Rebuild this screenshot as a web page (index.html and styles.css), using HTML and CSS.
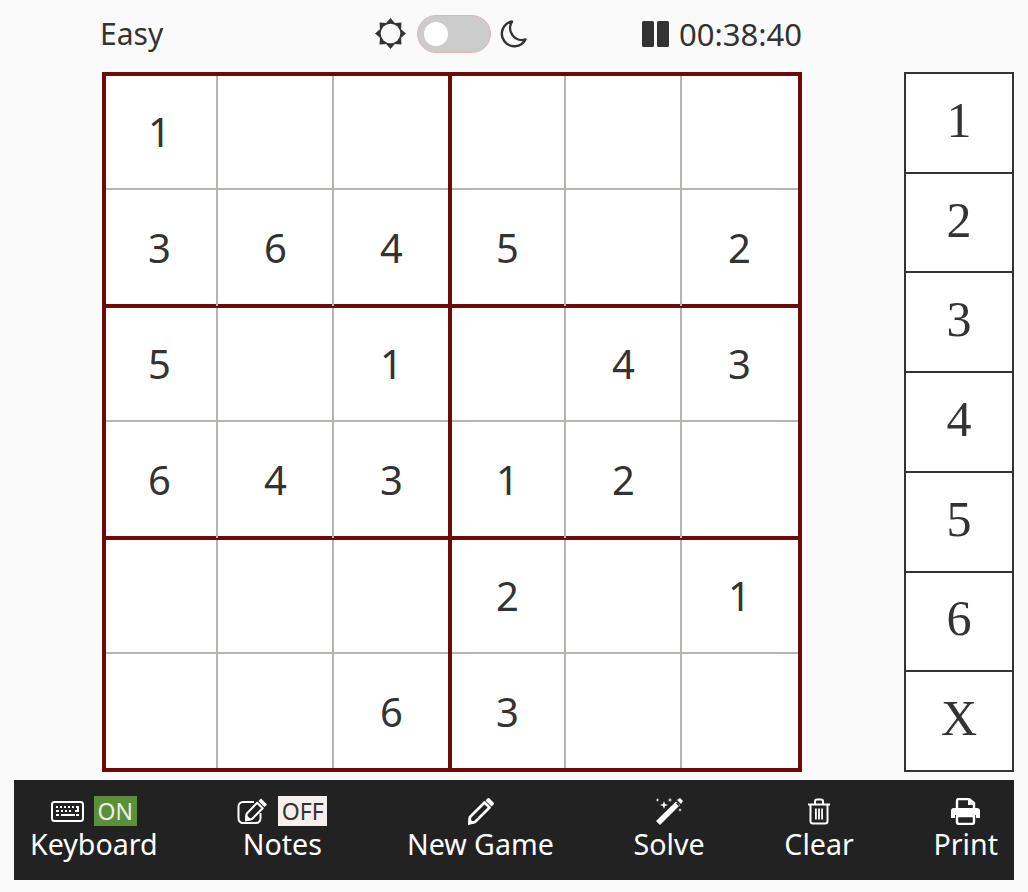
FILE: index.html
```html
<!DOCTYPE html>
<html lang="en">
<head>
<meta charset="utf-8">
<title>Sudoku</title>
<link rel="stylesheet" href="styles.css">
</head>
<body>
<div class="page">
  <div class="play">
    <div class="board-col">
      <header class="status">
        <span class="level">Easy</span>
        <div class="theme">
          <svg class="sun" viewBox="0 0 30 30" width="31" height="31"><polygon fill="#333" points="15,0 19.2,4.8 25.6,4.4 25.2,10.8 30,15 25.2,19.2 25.6,25.6 19.2,25.2 15,30 10.8,25.2 4.4,25.6 4.8,19.2 0,15 4.8,10.8 4.400,4.400 10.8,4.8"/><circle cx="15" cy="15" r="9.500" fill="#fafafa"/></svg>
          <span class="switch"><span class="knob"></span></span>
          <svg class="moon" viewBox="0 0 30 30" width="30" height="30"><path d="M14 2.500A12.500 12.500 0 1 0 27.500 20.500A12 12 0 0 1 14 2.500Z" fill="none" stroke="#333" stroke-width="2.400" stroke-linejoin="round"/></svg>
        </div>
        <div class="timer">
          <svg viewBox="0 0 28 28" width="28" height="28"><rect x="0" y="1" width="12" height="26" rx="1.500" fill="#333"/><rect x="15" y="1" width="12" height="26" rx="1.500" fill="#333"/></svg>
          <span>00:38:40</span>
        </div>
      </header>
      <div class="board">
        <div class="cell">1</div><div class="cell"></div><div class="cell box-r"></div><div class="cell"></div><div class="cell"></div><div class="cell end-c"></div>
        <div class="cell box-b">3</div><div class="cell box-b">6</div><div class="cell box-r box-b">4</div><div class="cell box-b">5</div><div class="cell box-b"></div><div class="cell end-c box-b">2</div>
        <div class="cell">5</div><div class="cell"></div><div class="cell box-r">1</div><div class="cell"></div><div class="cell">4</div><div class="cell end-c">3</div>
        <div class="cell box-b">6</div><div class="cell box-b">4</div><div class="cell box-r box-b">3</div><div class="cell box-b">1</div><div class="cell box-b">2</div><div class="cell end-c box-b"></div>
        <div class="cell"></div><div class="cell"></div><div class="cell box-r"></div><div class="cell">2</div><div class="cell"></div><div class="cell end-c">1</div>
        <div class="cell end-r"></div><div class="cell end-r"></div><div class="cell box-r end-r">6</div><div class="cell end-r">3</div><div class="cell end-r"></div><div class="cell end-c end-r"></div>
      </div>
    </div>
    <div class="numpad">
      <button class="key">1</button>
      <button class="key">2</button>
      <button class="key">3</button>
      <button class="key">4</button>
      <button class="key">5</button>
      <button class="key">6</button>
      <button class="key">X</button>
    </div>
  </div>
  <nav class="toolbar">
    <div class="tool">
      <div class="tool-top">
        <svg viewBox="0 0 33 21" width="33" height="21"><rect x="1" y="1" width="31" height="19" rx="2.500" fill="none" stroke="#fff" stroke-width="2"/><path d="M5 5h2v2H5zM9 5h2v2H9zM13 5h2v2h-2zM17 5h2v2h-2zM21 5h2v2h-2zM25 5h3v6h-4V9h2V7h-1zM5 9h3v2H5zM10 9h2v2h-2zM14 9h2v2h-2zM18 9h2v2h-2zM5 13h3v2H5zM10 13h14v2H10zM25 13h3v2h-3z" fill="#fff"/></svg>
        <span class="pill on">ON</span>
      </div>
      <span class="tool-label">Keyboard</span>
    </div>
    <div class="tool">
      <div class="tool-top">
        <svg viewBox="0 0 31 27" width="31" height="27"><path d="M17 4H6a4.500 4.500 0 0 0-4.500 4.500v12A4.500 4.500 0 0 0 6 25h13a4.500 4.500 0 0 0 4.500-4.500V15" fill="none" stroke="#fff" stroke-width="2"/><path d="M24 0.500L30 6.500L27.500 9L21.500 3Z" fill="#fff"/><path d="M20.200 4.800L25.700 10.300L15 21L9 22.300L9.800 15.500Z" fill="none" stroke="#fff" stroke-width="2" stroke-linejoin="round"/><path d="M8.500 16L14.500 22L8 23.500Z" fill="#fff"/></svg>
        <span class="pill off">OFF</span>
      </div>
      <span class="tool-label">Notes</span>
    </div>
    <div class="tool">
      <div class="tool-top">
        <svg viewBox="0 0 27 27" width="27" height="27"><path d="M18.500 2.500L20.500 0.500Q21.500 -0.500 22.500 0.500L26.500 4.500Q27.500 5.500 26.500 6.500L24.500 8.500Z" fill="#fff"/><path d="M17.500 4.500L22.500 9.500L8 24L2.500 25L3 19Z" fill="none" stroke="#fff" stroke-width="2.600" stroke-linejoin="round"/><path d="M1.500 19.500L7.500 25.500L1 27Z" fill="#fff"/></svg>
      </div>
      <span class="tool-label">New Game</span>
    </div>
    <div class="tool">
      <div class="tool-top">
        <svg viewBox="0 0 28 28" width="28" height="28"><path d="M22 3L25 1L28 4L26 7Z" fill="#fff"/><path d="M21 4.500L25 8L5 28L1 24Z" fill="#fff"/><path d="M21.500 6L24 8.500" stroke="#222" stroke-width="1.200"/><path d="M9 4L10 7L13 8L10 9L9 12L8 9L5 8L8 7ZM15 0.500L15.600 2.400L17.500 3L15.600 3.600L15 5.500L14.400 3.600L12.500 3L14.400 2.400ZM2.500 1L3 2.500L4.500 3L3 3.500L2.500 5L2 3.500L0.500 3L2 2.500ZM25 11L25.500 12.500L27 13L25.500 13.500L25 15L24.500 13.500L23 13L24.500 12.500Z" fill="#fff"/></svg>
      </div>
      <span class="tool-label">Solve</span>
    </div>
    <div class="tool">
      <div class="tool-top">
        <svg viewBox="0 0 24 27" width="24" height="27"><path d="M1 6.500H23M8 6V3.500Q8 1.500 10 1.500H14Q16 1.500 16 3.500V6M3.500 7V23Q3.500 25.500 6 25.500H18Q20.500 25.500 20.500 23V7" fill="none" stroke="#fff" stroke-width="2"/><path d="M8 10.500h1.800v11H8zM11.100 10.500h1.800v11h-1.800zM14.200 10.500H16v11h-1.800z" fill="#fff"/></svg>
      </div>
      <span class="tool-label">Clear</span>
    </div>
    <div class="tool">
      <div class="tool-top">
        <svg viewBox="0 0 29 27" width="29" height="27"><path d="M6 11V3Q6 1 8 1H18L23 5V11" fill="none" stroke="#fff" stroke-width="2.400"/><path d="M17 1L23.500 7H17Z" fill="#fff"/><path d="M3 10H26Q29 10 29 13V20H25V17H4V20H0V13Q0 10 3 10Z" fill="#fff"/><path d="M6 18H23V24Q23 26 21 26H8Q6 26 6 24Z" fill="none" stroke="#fff" stroke-width="2.400"/></svg>
      </div>
      <span class="tool-label">Print</span>
    </div>
  </nav>
</div>
</body>
</html>
```
FILE: styles.css
```css
* { box-sizing: border-box; }
html, body { margin: 0; padding: 0; }
body {
  background: #fafafa;
  color: #333;
  font-family: "Noto Sans", sans-serif;
  width: 1028px;
  height: 892px;
  overflow: hidden;
}
.page { padding: 0 14px; }
.play { display: flex; justify-content: flex-end; gap: 102px; }
.board-col { width: 700px; }
.status {
  height: 72px;
  display: flex;
  align-items: center;
  padding-bottom: 5px;
}
.level { flex: 1; font-size: 30px; line-height: 40px; margin-left: -2px; }
.theme { display: flex; align-items: center; gap: 10px; }
.sun { margin-right: 1px; }
.moon { margin-left: -3px; }
.switch {
  width: 74px;
  height: 38px;
  border-radius: 19px;
  background: #ccc;
  border: 1px solid #dfb8b8;
  padding: 6px;
  display: flex;
  align-items: center;
}
.knob { width: 24px; height: 24px; border-radius: 50%; background: #fff; }
.timer {
  flex: 1;
  display: flex;
  align-items: center;
  justify-content: flex-end;
  gap: 9px;
  font-size: 31px;
  line-height: 40px;
}
.board {
  position: relative;
  display: grid;
  grid-template-columns: repeat(6, 116px);
  grid-template-rows: repeat(6, 116px);
  padding: 2px 4px 2px 0;
  width: 700px;
  height: 700px;
  background: #fff;
}
.board::after {
  content: "";
  position: absolute;
  inset: 0;
  border: 4px solid #6f0a0a;
  pointer-events: none;
}
.cell {
  --r: inset -2px 0 #b5b5b0;
  --b: inset 0 -2px #b5b5b0;
  display: flex;
  align-items: center;
  justify-content: center;
  padding-right: 1px;
  font-size: 40px;
  line-height: 1;
  box-shadow: var(--r), var(--b);
}
.box-r { --r: inset -2px 0 #6f0a0a, 2px 0 #6f0a0a; position: relative; z-index: 1; }
.box-b { --b: inset 0 -2px #6f0a0a, 0 2px #6f0a0a; position: relative; z-index: 1; }
.end-c { --r: 0 0 transparent; }
.end-r { --b: 0 0 transparent; }
.numpad {
  width: 110px;
  height: 700px;
  margin-top: 72px;
  display: flex;
  flex-direction: column;
  border: 2px solid #333;
  background: #fff;
}
.key {
  flex: 1;
  border: 0;
  border-bottom: 2px solid #333;
  background: transparent;
  padding: 0 0 6px;
  color: #333;
  font-family: "Liberation Serif", serif;
  font-size: 50px;
  line-height: 1;
}
.key:last-child { border-bottom: 0; }
.toolbar {
  margin-top: 8px;
  height: 100px;
  background: #222;
  color: #fff;
  display: flex;
  justify-content: space-between;
  padding: 0 16px;
}
.tool { display: flex; flex-direction: column; align-items: center; padding-top: 16px; }
.tool-top { height: 30px; display: flex; align-items: center; justify-content: center; gap: 10px; }
.tool-label { font-size: 28.600px; line-height: 38px; margin-top: -1px; }
.pill { font-size: 23px; line-height: 30px; height: 30px; padding: 0 3.500px; }
.on { background: #5b8f3b; color: #e8efe2; }
.off { background: #f5f0ee; color: #333; }
```
